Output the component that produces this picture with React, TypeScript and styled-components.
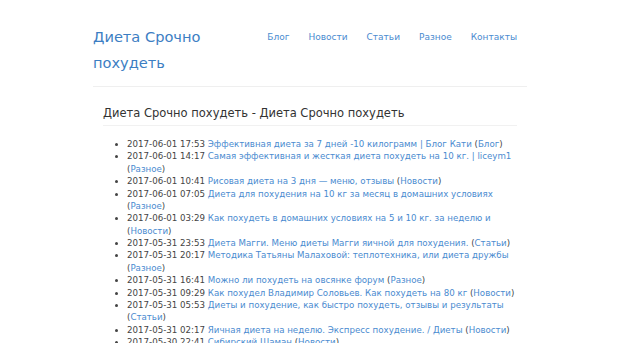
import React from "react";
import styled, { createGlobalStyle } from "styled-components";

const Global = createGlobalStyle`
  html, body { margin: 0; padding: 0; background: #fff; }
  body { font-family: "DejaVu Sans", Verdana, sans-serif; color: #333; }
`;

const Container = styled.div`
  width: 434px;
  margin: 0 auto;
`;

const Header = styled.header`
  display: flex;
  justify-content: space-between;
  align-items: flex-start;
  padding-top: 24px;
  height: 62px;
  border-bottom: 1px solid #efefef;
`;

const Brand = styled.a`
  display: block;
  width: 130px;
  font-size: 14.6px;
  line-height: 26px;
  color: #3c7ec3;
  text-decoration: none;
`;

const Nav = styled.nav`
  display: flex;
  padding-right: 10px;
  padding-top: 7px;
`;

const NavLink = styled.a`
  font-size: 9px;
  line-height: 12px;
  padding: 0 9.5px;
  color: #4a8bd0;
  text-decoration: none;
  &:last-child { padding-right: 0; }
`;

const Panel = styled.main`
  padding: 0 10px;
`;

const Heading = styled.h1`
  margin: 0;
  padding: 18px 0 4px;
  font-size: 11.5px;
  line-height: 16px;
  font-weight: normal;
  color: #333;
  border-bottom: 1px solid #f1f1f1;
`;

const List = styled.ul`
  margin: 12px 0 0;
  padding-left: 24px;
  font-size: 8.67px;
  line-height: 12.375px;
  color: #444;
`;

const Link = styled.a`
  color: #4a8bd0;
  text-decoration: none;
`;

type Item = { date: string; title: string; cat: string };

const items: Item[] = [
  { date: "2017-06-01 17:53", title: "Эффективная диета за 7 дней -10 килограмм | Блог Кати", cat: "Блог" },
  { date: "2017-06-01 14:17", title: "Самая эффективная и жесткая диета похудеть на 10 кг. | liceym1", cat: "Разное" },
  { date: "2017-06-01 10:41", title: "Рисовая диета на 3 дня — меню, отзывы", cat: "Новости" },
  { date: "2017-06-01 07:05", title: "Диета для похудения на 10 кг за месяц в домашних условиях", cat: "Разное" },
  { date: "2017-06-01 03:29", title: "Как похудеть в домашних условиях на 5 и 10 кг. за неделю и", cat: "Новости" },
  { date: "2017-05-31 23:53", title: "Диета Магги. Меню диеты Магги яичной для похудения.", cat: "Статьи" },
  { date: "2017-05-31 20:17", title: "Методика Татьяны Малаховой: теплотехника, или диета дружбы", cat: "Разное" },
  { date: "2017-05-31 16:41", title: "Можно ли похудеть на овсянке форум", cat: "Разное" },
  { date: "2017-05-31 09:29", title: "Как похудел Владимир Соловьев. Как похудеть на 80 кг", cat: "Новости" },
  { date: "2017-05-31 05:53", title: "Диеты и похудение, как быстро похудеть, отзывы и результаты", cat: "Статьи" },
  { date: "2017-05-31 02:17", title: "Яичная диета на неделю. Экспресс похудение. / Диеты", cat: "Новости" },
  { date: "2017-05-30 22:41", title: "Сибирский Шаман", cat: "Новости" },
];

const nav = ["Блог", "Новости", "Статьи", "Разное", "Контакты"];

export default function App() {
  return (
    <>
      <Global />
      <Container>
        <Header>
          <Brand href="#">Диета Срочно похудеть</Brand>
          <Nav>
            {nav.map((n) => (
              <NavLink key={n} href="#">{n}</NavLink>
            ))}
          </Nav>
        </Header>
        <Panel>
          <Heading>Диета Срочно похудеть - Диета Срочно похудеть</Heading>
          <List>
            {items.map((it) => (
              <li key={it.date}>
                {it.date} <Link href="#">{it.title}</Link> (<Link href="#">{it.cat}</Link>)
              </li>
            ))}
          </List>
        </Panel>
      </Container>
    </>
  );
}
